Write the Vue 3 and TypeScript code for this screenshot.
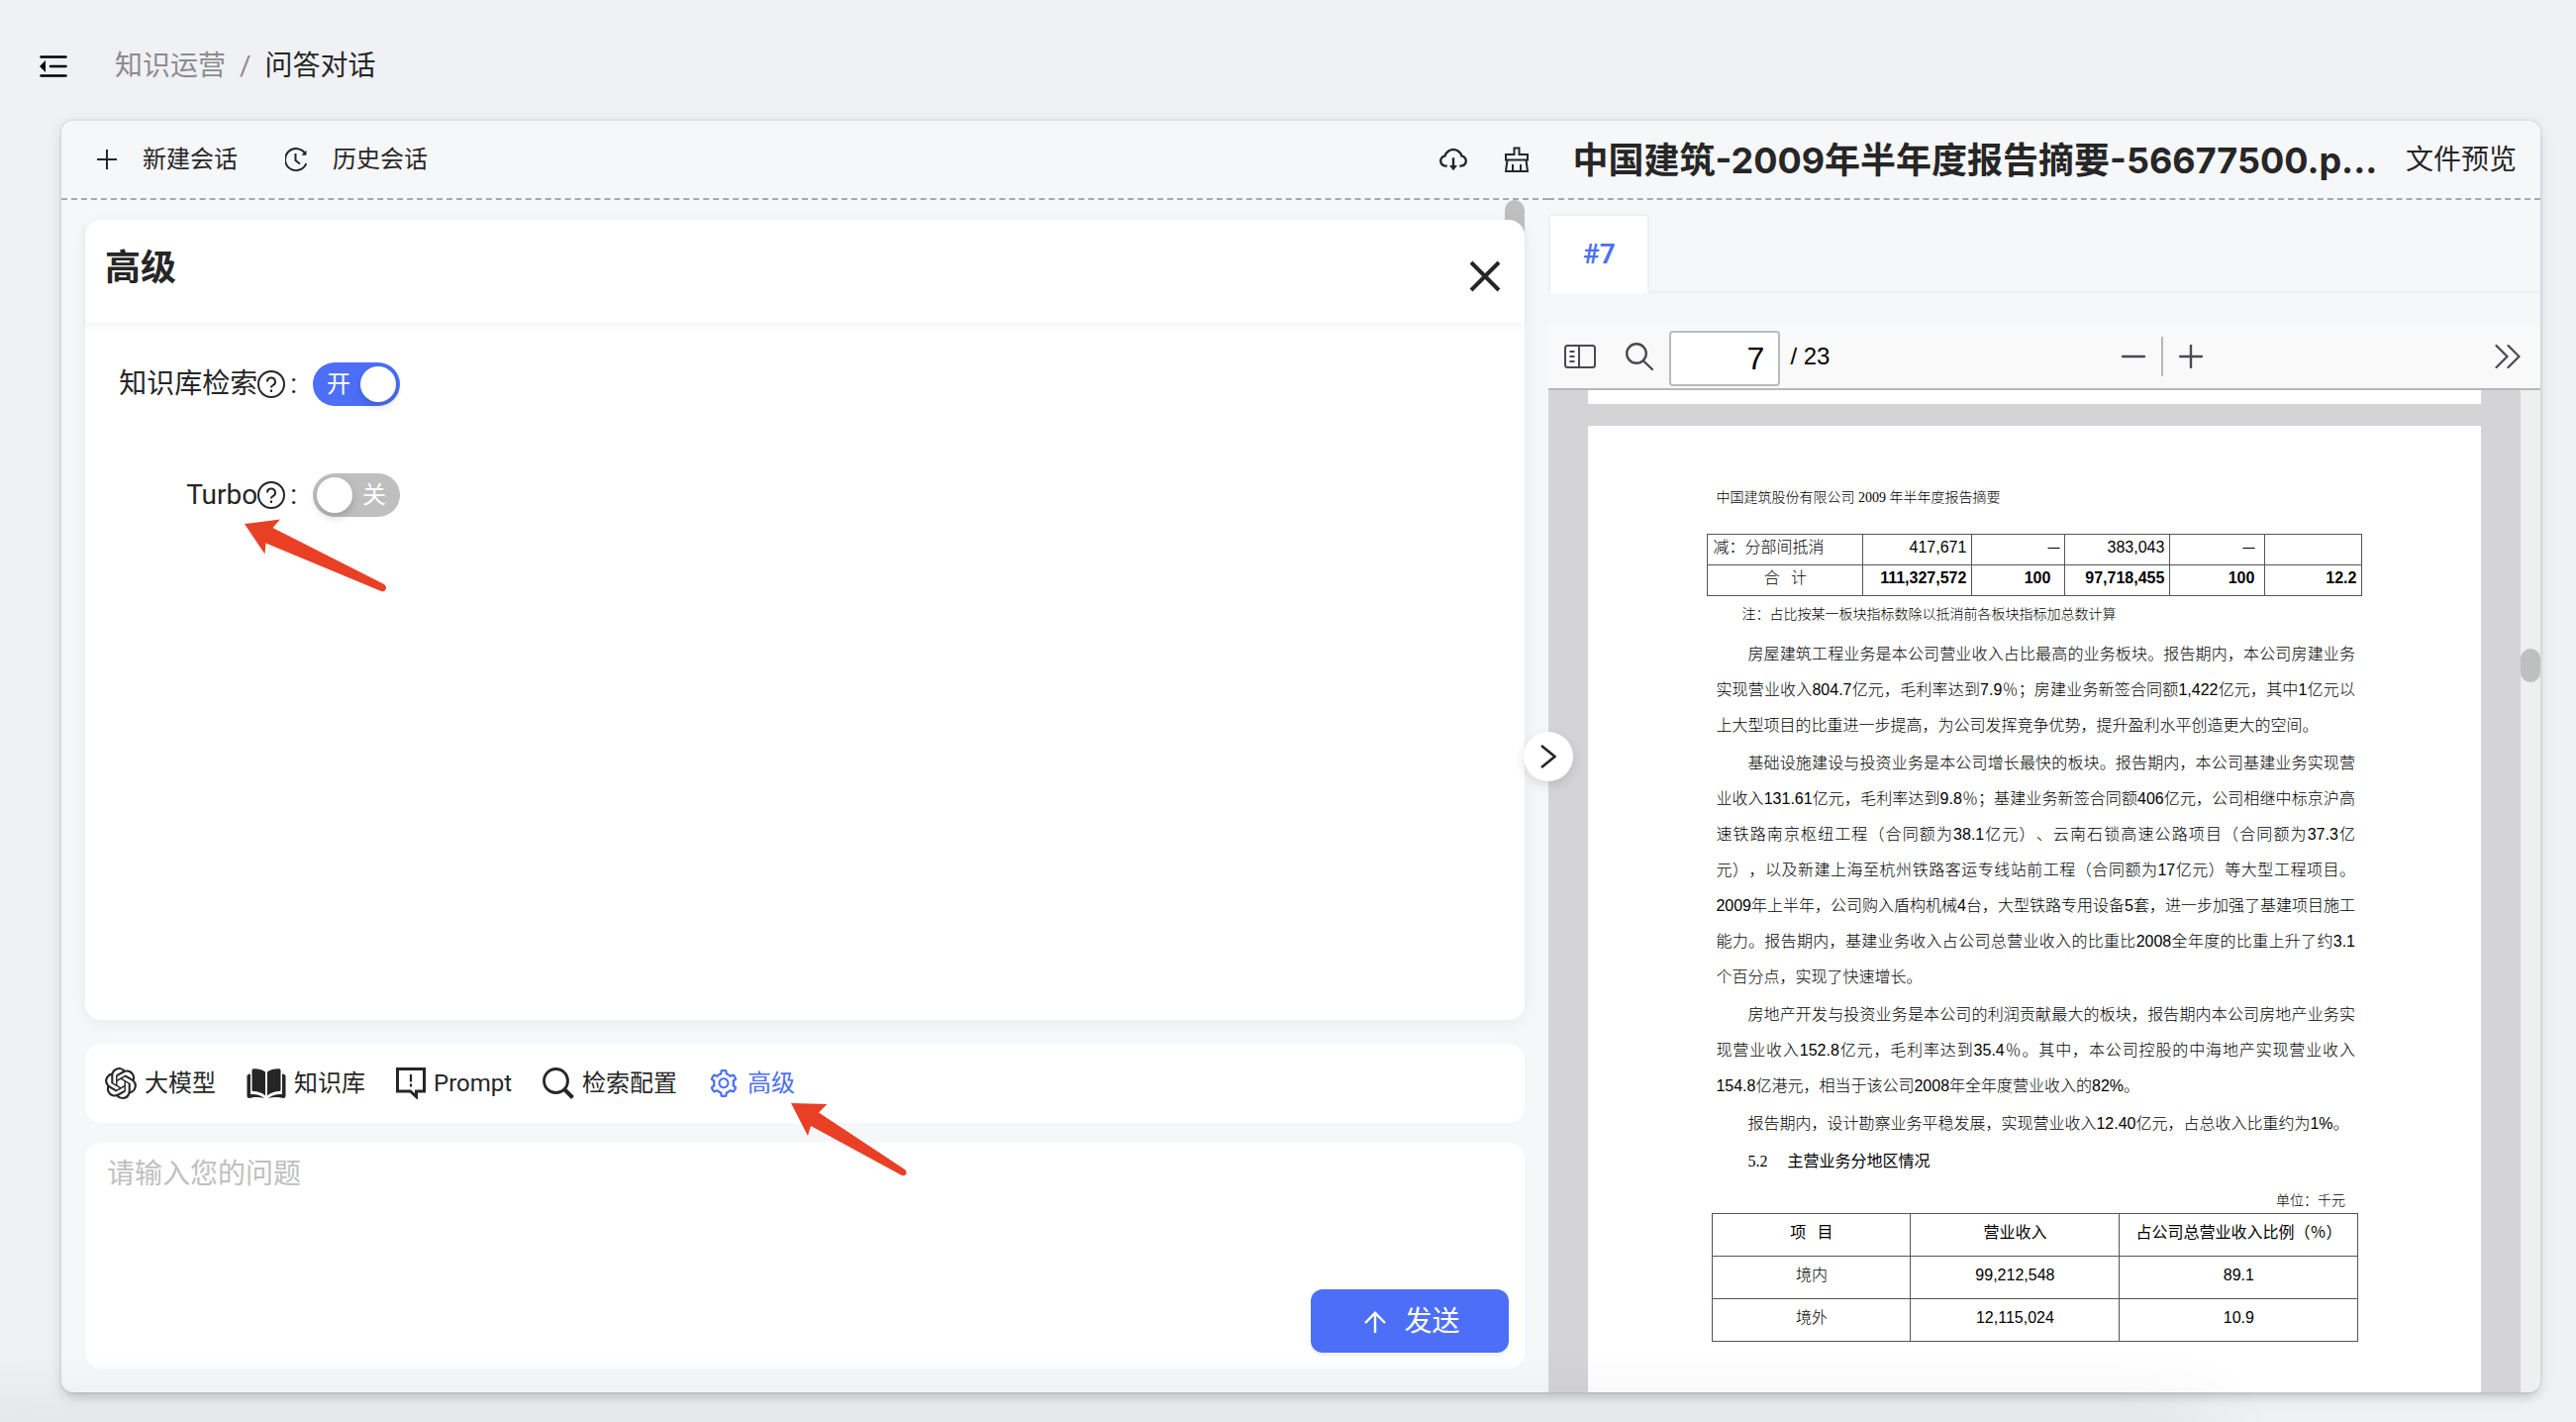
<script setup lang="ts">
import { ref } from 'vue'

interface PageLine {
  text: string
  first?: boolean
  last?: boolean
}

const searchOn = ref(true)
const turboOn = ref(false)
const question = ref('')
const pageNumber = ref('7')

const paragraphs: PageLine[][] = [
  [
    { text: '房屋建筑工程业务是本公司营业收入占比最高的业务板块。报告期内，本公司房建业务', first: true },
    { text: '实现营业收入804.7亿元，毛利率达到7.9％；房建业务新签合同额1,422亿元，其中1亿元以' },
    { text: '上大型项目的比重进一步提高，为公司发挥竞争优势，提升盈利水平创造更大的空间。', last: true },
  ],
  [
    { text: '基础设施建设与投资业务是本公司增长最快的板块。报告期内，本公司基建业务实现营', first: true },
    { text: '业收入131.61亿元，毛利率达到9.8％；基建业务新签合同额406亿元，公司相继中标京沪高' },
    { text: '速铁路南京枢纽工程（合同额为38.1亿元）、云南石锁高速公路项目（合同额为37.3亿' },
    { text: '元），以及新建上海至杭州铁路客运专线站前工程（合同额为17亿元）等大型工程项目。' },
    { text: '2009年上半年，公司购入盾构机械4台，大型铁路专用设备5套，进一步加强了基建项目施工' },
    { text: '能力。报告期内，基建业务收入占公司总营业收入的比重比2008全年度的比重上升了约3.1' },
    { text: '个百分点，实现了快速增长。', last: true },
  ],
  [
    { text: '房地产开发与投资业务是本公司的利润贡献最大的板块，报告期内本公司房地产业务实', first: true },
    { text: '现营业收入152.8亿元，毛利率达到35.4％。其中，本公司控股的中海地产实现营业收入' },
    { text: '154.8亿港元，相当于该公司2008年全年度营业收入的82%。', last: true },
  ],
  [{ text: '报告期内，设计勘察业务平稳发展，实现营业收入12.40亿元，占总收入比重约为1%。', first: true, last: true }],
]

const regions = [
  { name: '境内', income: '99,212,548', share: '89.1' },
  { name: '境外', income: '12,115,024', share: '10.9' },
]
</script>

<template>
  <div class="shell">
    <header class="topbar">
      <button class="plain" type="button" aria-label="收起菜单">
        <svg class="menu-icon" width="28" height="24" viewBox="0 0 28 24">
          <path d="M1.5 2.5h25M11 12h15.500M1.500 21.500h25" stroke="#000" stroke-width="2.600" stroke-linecap="round" />
          <path d="M0 12l6-6v12z" fill="#000" />
        </svg>
      </button>
      <nav class="crumbs" aria-label="面包屑">
        <a href="#" class="crumb-parent">知识运营</a>
        <span class="crumb-sep">/</span>
        <span>问答对话</span>
      </nav>
    </header>

    <main class="panel">
      <section class="chat">
        <div class="chat-head">
          <button class="plain head-action" type="button">
            <svg width="20" height="20" viewBox="0 0 20 20"><path d="M10 0v20M0 10h20" stroke="#262626" stroke-width="2" /></svg>
            新建会话
          </button>
          <button class="plain head-action" type="button">
            <svg width="22" height="24" viewBox="1 0 22 24" fill="none" stroke="#262626" stroke-width="2">
              <path d="M21.500 6.500A11 11 0 1 0 22.300 16" />
              <path d="M11.500 6v7l4.500 3.500" />
              <path d="M22.500 2.800v5h-5z" fill="#262626" stroke="none" />
            </svg>
            历史会话
          </button>
          <div class="head-tools">
            <button class="plain" type="button" aria-label="下载">
              <svg width="32" height="32" viewBox="0 0 1024 1024" fill="#262626">
                <path d="M624 706.300h-74.100V464c0-4.400-3.600-8-8-8h-60c-4.400 0-8 3.600-8 8v242.300H400c-6.700 0-10.400 7.700-6.300 12.900l112 141.700a8 8 0 0012.600 0l112-141.700c4.100-5.200.4-12.900-6.300-12.900z" />
                <path d="M811.400 366.700C765.600 245.900 648.900 160 512.200 160S258.800 245.800 213 366.600C127.300 389.100 64 467.200 64 560c0 110.500 89.500 200 199.900 200H304c4.400 0 8-3.600 8-8v-60c0-4.400-3.600-8-8-8h-40.100c-33.700 0-65.400-13.400-89-37.700-23.500-24.200-36-56.800-34.900-90.600.9-26.400 9.900-51.200 26.200-72.100 16.700-21.300 40.100-36.800 66.100-43.700l37.900-9.900 13.900-36.600c8.600-22.800 20.600-44.100 35.700-63.400a245.600 245.600 0 0152.400-49.900c41.100-28.900 89.500-44.200 140-44.200s98.900 15.300 140 44.200c19.900 14 37.500 30.800 52.400 49.900 15.100 19.300 27.100 40.700 35.700 63.400l13.800 36.500 37.800 10C846.100 454.500 884 503.800 884 560c0 33.100-12.900 64.300-36.300 87.700a123.070 123.070 0 01-87.600 36.300H720c-4.400 0-8 3.600-8 8v60c0 4.400 3.600 8 8 8h40.100C870.500 760 960 670.500 960 560c0-92.700-63.100-170.700-148.600-193.300z" />
              </svg>
            </button>
            <button class="plain" type="button" aria-label="清空">
              <svg width="24" height="26" viewBox="0 0 24 26" fill="none" stroke="#262626" stroke-width="2">
                <path d="M9.500 8V1.500h5V8H23v5.500H1V8zM2.500 13.500L1 25h22l-1.500-11.500M8 25v-7M16 25v-7" />
              </svg>
            </button>
          </div>
        </div>

        <div class="chat-body">
          <span class="chat-thumb" />
          <section class="card settings">
            <div class="settings-head">
              <h2>高级</h2>
              <button class="plain" type="button" aria-label="关闭">
                <svg width="32" height="32" viewBox="0 0 32 32"><path d="M2 2l28 28M30 2L2 30" stroke="#262626" stroke-width="4" /></svg>
              </button>
            </div>
            <div class="settings-body">
              <div class="field">
                <label class="field-label" for="kb-switch">
                  知识库检索
                  <svg width="28" height="28" viewBox="0 0 28 28" fill="none" stroke="#262626" stroke-width="2">
                    <circle cx="14" cy="14" r="13" /><path d="M10 11.500a4 4 0 1 1 5.600 3.600Q14 15.800 14 17.500" /><path d="M14 19.500v2.500" />
                  </svg>
                  <span class="colon">:</span>
                </label>
                <span class="switch" :class="{ on: searchOn }">
                  <input id="kb-switch" v-model="searchOn" type="checkbox" role="switch" />
                  <span class="switch-text">{{ searchOn ? '开' : '关' }}</span>
                </span>
              </div>
              <div class="field">
                <label class="field-label" for="turbo-switch">
                  Turbo
                  <svg width="28" height="28" viewBox="0 0 28 28" fill="none" stroke="#262626" stroke-width="2">
                    <circle cx="14" cy="14" r="13" /><path d="M10 11.500a4 4 0 1 1 5.600 3.600Q14 15.800 14 17.500" /><path d="M14 19.500v2.500" />
                  </svg>
                  <span class="colon">:</span>
                </label>
                <span class="switch" :class="{ on: turboOn }">
                  <input id="turbo-switch" v-model="turboOn" type="checkbox" role="switch" />
                  <span class="switch-text">{{ turboOn ? '开' : '关' }}</span>
                </span>
                <svg class="arrow arrow-turbo" width="144" height="74" viewBox="0 0 144 74">
                  <path d="M0 5L36 0.500L28.500 9L141 66Q144.500 69 142 72Q141 74 138 73L21.500 24.500L20.500 35.500Z" fill="#e94025" />
                </svg>
              </div>
            </div>
          </section>

          <div class="card modes">
            <button class="plain mode" type="button">
              <svg width="32" height="32" viewBox="0 0 24 24" fill="#262626">
                <path d="M22.2819 9.8211a5.9847 5.9847 0 0 0-.5157-4.9108 6.0462 6.0462 0 0 0-6.5098-2.9A6.0651 6.0651 0 0 0 4.9807 4.1818a5.9847 5.9847 0 0 0-3.9977 2.9 6.0462 6.0462 0 0 0 .7427 7.0966 5.98 5.98 0 0 0 .511 4.9107 6.051 6.051 0 0 0 6.5146 2.9001A5.9847 5.9847 0 0 0 13.2599 24a6.0557 6.0557 0 0 0 5.7718-4.2058 5.9894 5.9894 0 0 0 3.9977-2.9001 6.0557 6.0557 0 0 0-.7475-7.0729zm-9.022 12.6081a4.4755 4.4755 0 0 1-2.8764-1.0408l.1419-.0804 4.7783-2.7582a.7948.7948 0 0 0 .3927-.6813v-6.7369l2.02 1.1686a.071.071 0 0 1 .038.052v5.5826a4.504 4.504 0 0 1-4.4945 4.4944zm-9.6607-4.1254a4.4708 4.4708 0 0 1-.5346-3.0137l.142.0852 4.783 2.7582a.7712.7712 0 0 0 .7806 0l5.8428-3.3685v2.3324a.0804.0804 0 0 1-.0332.0615L9.74 19.9502a4.4992 4.4992 0 0 1-6.1408-1.6464zM2.3408 7.8956a4.485 4.485 0 0 1 2.3655-1.9728V11.6a.7664.7664 0 0 0 .3879.6765l5.8144 3.3543-2.0201 1.1685a.0757.0757 0 0 1-.071 0l-4.8303-2.7865A4.504 4.504 0 0 1 2.3408 7.872zm16.5963 3.8558L13.1038 8.364 15.1192 7.2a.0757.0757 0 0 1 .071 0l4.8303 2.7913a4.4944 4.4944 0 0 1-.6765 8.1042v-5.6772a.79.79 0 0 0-.407-.667zm2.0107-3.0231l-.142-.0852-4.7735-2.7818a.7759.7759 0 0 0-.7854 0L9.409 9.2297V6.8974a.0662.0662 0 0 1 .0284-.0615l4.8303-2.7866a4.4992 4.4992 0 0 1 6.6802 4.66zM8.3065 12.863l-2.02-1.1638a.0804.0804 0 0 1-.038-.0567V6.0742a4.4992 4.4992 0 0 1 7.3757-3.4537l-.142.0805L8.704 5.459a.7948.7948 0 0 0-.3927.6813zm1.0976-2.3654l2.602-1.4998 2.6069 1.4998v2.9994l-2.5974 1.4997-2.6067-1.4997Z" />
              </svg>
              大模型
            </button>
            <button class="plain mode" type="button">
              <svg width="40" height="32" viewBox="0 0 40 32" fill="#262626">
                <path d="M19 4.500C16 2 11 1 7 1.200Q5.500 1.300 5.500 3V22.500Q5.500 24 7 24C11 24.200 16 25.500 19 28.500z" />
                <path d="M21 4.500C24 2 29 1 33 1.200Q34.500 1.300 34.500 3V22.500Q34.500 24 33 24C29 24.200 24 25.500 21 28.500z" />
                <path d="M4 6.500Q.5 6.500.5 9V29Q.5 31 3 31C9 29.500 13 30 18 31C14 27.500 9 26.500 4 27z" />
                <path d="M36 6.500Q39.500 6.500 39.500 9V29Q39.500 31 37 31C31 29.500 27 30 22 31C26 27.500 31 26.500 36 27z" />
              </svg>
              知识库
            </button>
            <button class="plain mode" type="button">
              <svg width="30" height="32" viewBox="0 0 30 32" fill="none" stroke="#262626" stroke-width="3">
                <path d="M1.500 1.500h27v22.500H20.500V29.500L14.500 24H1.500z" /><path d="M15 7v7.500M15 16.500v3" stroke-width="2.200" />
              </svg>
              Prompt
            </button>
            <button class="plain mode" type="button">
              <svg width="32" height="32" viewBox="0 0 32 32" fill="none" stroke="#262626">
                <circle cx="13.500" cy="13.500" r="12" stroke-width="2.800" /><path d="M21.500 21.500L30.500 30.500" stroke-width="4" />
              </svg>
              检索配置
            </button>
            <button class="plain mode active" type="button">
              <svg width="32" height="32" viewBox="0 0 1024 1024" fill="currentColor">
                <path d="M924.800 625.700l-65.500-56c3.100-19 4.700-38.400 4.700-57.800s-1.600-38.800-4.700-57.800l65.500-56a32.030 32.030 0 009.300-35.200l-.9-2.600a443.740 443.740 0 00-79.700-137.900l-1.800-2.100a32.120 32.120 0 00-35.100-9.500l-81.300 28.900c-30-24.600-63.500-44-99.700-57.600l-15.700-85a32.050 32.050 0 00-25.800-25.700l-2.700-.5c-52.100-9.400-106.900-9.400-159 0l-2.700.5a32.050 32.050 0 00-25.800 25.700l-15.800 85.400a351.860 351.860 0 00-99 57.400l-81.900-29.100a32 32 0 00-35.100 9.500l-1.800 2.100a446.020 446.020 0 00-79.700 137.900l-.9 2.600c-4.500 12.500-.8 26.500 9.300 35.200l66.300 56.600c-3.100 18.800-4.600 38-4.600 57.100 0 19.200 1.500 38.400 4.600 57.100L99 625.500a32.030 32.030 0 00-9.300 35.200l.9 2.600c18.100 50.400 44.900 96.900 79.700 137.900l1.800 2.100a32.120 32.120 0 0035.100 9.500l81.900-29.100c29.800 24.500 63.100 43.900 99 57.400l15.800 85.400a32.050 32.050 0 0025.800 25.700l2.700.5a449.400 449.400 0 00159 0l2.700-.5a32.050 32.050 0 0025.800-25.700l15.700-85a350 350 0 0099.700-57.600l81.300 28.900a32 32 0 0035.100-9.500l1.800-2.100c34.800-41.100 61.600-87.500 79.700-137.900l.9-2.600c4.500-12.300.8-26.300-9.300-35zM788.300 465.900c2.500 15.100 3.800 30.600 3.800 46.100s-1.300 31-3.800 46.100l-6.600 40.100 74.700 63.900a370.030 370.030 0 01-42.600 73.600L721 702.800l-31.400 25.800c-23.900 19.600-50.500 35-79.300 45.800l-38.100 14.300-17.900 97a377.500 377.500 0 01-85 0l-17.900-97.200-37.800-14.500c-28.500-10.800-55-26.200-78.700-45.700l-31.400-25.900-93.400 33.200c-17-22.900-31.200-47.600-42.600-73.600l75.500-64.500-6.500-40c-2.400-14.900-3.700-30.300-3.700-45.500 0-15.300 1.200-30.600 3.700-45.500l6.500-40-75.500-64.500c11.300-26.100 25.600-50.700 42.600-73.600l93.400 33.200 31.400-25.900c23.700-19.500 50.200-34.900 78.700-45.700l37.900-14.300 17.900-97.200c28.100-3.200 56.800-3.200 85 0l17.900 97 38.100 14.300c28.700 10.800 55.400 26.200 79.300 45.800l31.400 25.800 92.800-32.900c17 22.900 31.200 47.600 42.600 73.600L781.800 426l6.500 39.900zM512 326c-97.200 0-176 78.800-176 176s78.800 176 176 176 176-78.800 176-176-78.800-176-176-176zm79.200 255.200A111.600 111.600 0 01512 614c-29.900 0-58-11.700-79.200-32.800A111.600 111.600 0 01400 502c0-29.900 11.700-58 32.800-79.200C454 401.600 482.100 390 512 390c29.900 0 58 11.600 79.200 32.800A111.600 111.600 0 01624 502c0 29.900-11.700 58-32.800 79.200z" />
              </svg>
              高级
              <svg class="arrow arrow-mode" width="118" height="74" viewBox="0 0 118 74">
                <path d="M0 0L36.500 1L28 9.500L115 67Q118 70 115.500 72.500Q113.500 74 111 72.500L20 23L17 33Z" fill="#e94025" />
              </svg>
            </button>
          </div>

          <div class="card composer">
            <textarea v-model="question" placeholder="请输入您的问题" aria-label="问题" />
            <button class="send" type="button">
              <svg width="22" height="22" viewBox="0 0 22 22" fill="none" stroke="#fff" stroke-width="2.400"><path d="M11 22V2M1 12L11 1.800L21 12" /></svg>
              发送
            </button>
          </div>
        </div>
      </section>

      <section class="preview">
        <div class="preview-head">
          <h1>中国建筑-2009年半年度报告摘要-56677500.p...</h1>
          <a href="#">文件预览</a>
        </div>
        <div class="tabs"><button class="tab" type="button">#7</button></div>

        <div class="pdf-bar">
          <button class="plain side-btn" type="button" aria-label="侧栏">
            <svg width="32" height="24" viewBox="0 0 32 24" fill="none" stroke="#4a4a4e" stroke-width="2">
              <rect x="1" y="1" width="30" height="22" rx="2.500" /><path d="M15 1v22M5.500 7h5M5.500 12h5M5.500 17h5" />
            </svg>
          </button>
          <button class="plain find-btn" type="button" aria-label="查找">
            <svg width="28" height="28" viewBox="0 0 28 28" fill="none" stroke="#4a4a4e" stroke-width="2.400" stroke-linecap="round">
              <circle cx="11" cy="11" r="9.800" /><path d="M18 18.500L27 27" />
            </svg>
          </button>
          <input v-model="pageNumber" class="page-input" aria-label="页码" />
          <span class="page-total">/ 23</span>
          <div class="zoom">
            <button class="plain" type="button" aria-label="缩小">
              <svg width="24" height="24" viewBox="0 0 24 24"><path d="M1 12h22" stroke="#4a4a4e" stroke-width="2.400" stroke-linecap="round" /></svg>
            </button>
            <span class="zoom-sep" />
            <button class="plain" type="button" aria-label="放大">
              <svg width="24" height="24" viewBox="0 0 24 24"><path d="M1 12h22M12 1v22" stroke="#4a4a4e" stroke-width="2.400" stroke-linecap="round" /></svg>
            </button>
          </div>
          <button class="plain" type="button" aria-label="更多">
            <svg width="26" height="24" viewBox="0 0 26 24" fill="none" stroke="#4a4a4e" stroke-width="2.200" stroke-linecap="round"><path d="M1.500 1L12.500 12L1.500 23M13.500 1L24.500 12L13.500 23" /></svg>
          </button>
        </div>

        <div class="viewer">
          <div class="sheets">
            <div class="sheet-prev" />
            <article class="sheet">
              <p class="doc-title">中国建筑股份有限公司 2009 年半年度报告摘要</p>
              <table class="grid sums">
                <colgroup><col class="s1" /><col class="s2" /><col class="s3" /><col class="s4" /><col class="s5" /><col /></colgroup>
                <tbody>
                  <tr>
                    <td class="name">减：分部间抵消</td><td>417,671</td><td class="dash">—</td><td>383,043</td><td class="dash near">—</td><td></td>
                  </tr>
                  <tr class="total">
                    <td class="sum">合&ensp;&thinsp;计</td><td>111,327,572</td><td class="far">100</td><td>97,718,455</td><td class="near">100</td><td>12.2</td>
                  </tr>
                </tbody>
              </table>
              <p class="doc-note">注：占比按某一板块指标数除以抵消前各板块指标加总数计算</p>
              <div v-for="(lines, i) in paragraphs" :key="i" class="para">
                <div v-for="line in lines" :key="line.text" class="line" :class="{ first: line.first, last: line.last }">{{ line.text }}</div>
              </div>
              <h3><span class="num">5.2</span>主营业务分地区情况</h3>
              <p class="unit">单位：千元</p>
              <table class="grid areas">
                <colgroup><col class="a1" /><col class="a2" /><col /></colgroup>
                <thead>
                  <tr><th>项&ensp;&thinsp;目</th><th>营业收入</th><th>占公司总营业收入比例（％）</th></tr>
                </thead>
                <tbody>
                  <tr v-for="r in regions" :key="r.name"><td>{{ r.name }}</td><td>{{ r.income }}</td><td>{{ r.share }}</td></tr>
                </tbody>
              </table>
            </article>
          </div>
          <div class="track"><span class="track-thumb" /></div>
        </div>
      </section>

      <button class="collapse" type="button" aria-label="收起预览">
        <svg width="16" height="24" viewBox="0 0 16 24" fill="none" stroke="#262626" stroke-width="2.600"><path d="M1 1L14.500 12L1 23" /></svg>
      </button>
    </main>
    <div class="bottom-shade" />
  </div>
</template>

<style>
html,
body {
  margin: 0;
  background: #f0f1f5;
}
</style>

<style scoped>
.shell {
  position: relative;
  display: flex;
  flex-direction: column;
  box-sizing: border-box;
  height: 100vh;
  padding: 0 36px 30px 62px;
  overflow: hidden;
  background: #f0f1f5;
  color: #262626;
  font-family: Roboto, 'Noto Sans CJK SC', sans-serif;
  font-size: 28px;
  line-height: 40px;
}
.shell * {
  box-sizing: border-box;
}
h1,
h2,
h3,
p {
  margin: 0;
}
a {
  color: inherit;
  text-decoration: none;
}
svg {
  display: block;
  flex: none;
}
button,
input,
textarea {
  font: inherit;
  color: inherit;
}
.plain {
  display: flex;
  align-items: center;
  padding: 0;
  border: 0;
  background: none;
  white-space: nowrap;
}
.topbar {
  display: flex;
  align-items: center;
  flex: none;
  gap: 48px;
  height: 122px;
  margin-left: -22px;
  padding-top: 12px;
}
.crumbs {
  display: flex;
  gap: 14px;
}
.crumb-parent,
.crumb-sep {
  color: #8c8c8c;
}
.panel {
  position: relative;
  display: grid;
  flex: 1;
  grid-template-columns: 3fr 2fr;
  min-height: 0;
  border-radius: 12px;
  background: #f6f7f9;
  box-shadow: 0 0 0 2px rgba(0, 0, 0, 0.04), 0 8px 10px -4px rgba(0, 0, 0, 0.12), 0 4px 16px rgba(0, 0, 0, 0.1);
}
.chat,
.preview {
  display: flex;
  flex-direction: column;
  min-width: 0;
  min-height: 0;
}
.chat-head,
.preview-head {
  display: flex;
  align-items: center;
  flex: none;
  height: 80px;
  border-bottom: 2px dashed #a8a8ab;
}
.chat-head {
  gap: 48px;
  padding: 0 20px 0 36px;
  font-size: 24px;
}
.head-action {
  gap: 26px;
}
.head-tools {
  display: flex;
  gap: 36px;
  margin-left: auto;
}
.chat-body {
  position: relative;
  display: flex;
  flex: 1;
  flex-direction: column;
  min-height: 0;
  padding: 20px 24px 24px;
}
.chat-thumb {
  position: absolute;
  top: 0;
  right: 24px;
  width: 20px;
  height: 60px;
  border-radius: 10px;
  background: #bfbfbf;
}
.card {
  border-radius: 16px;
  background: #fff;
}
.settings {
  position: relative;
  flex: 1;
  min-height: 0;
  margin-bottom: 24px;
  box-shadow: 0 2px 16px rgba(0, 0, 0, 0.06);
}
.settings-head {
  display: flex;
  align-items: center;
  justify-content: space-between;
  height: 104px;
  padding: 10px 24px 0 20px;
  box-shadow: 0 4px 6px rgba(0, 0, 0, 0.04);
}
h2 {
  margin-bottom: 16px;
  font-size: 36px;
  font-weight: 700;
  line-height: 48px;
}
.settings-body {
  display: flex;
  flex-direction: column;
  gap: 68px;
  padding: 40px 34px;
}
.field {
  position: relative;
  display: flex;
  align-items: center;
  gap: 16px;
}
.field-label {
  display: flex;
  align-items: center;
  justify-content: flex-end;
  width: 180px;
  white-space: nowrap;
}
.colon {
  padding-left: 5px;
}
.switch {
  position: relative;
  display: grid;
  align-items: center;
  width: 88px;
  height: 44px;
  border-radius: 22px;
  background: #bfbfbf;
  color: #fff;
  font-size: 24px;
}
.switch.on {
  background: #4d6ff7;
}
.switch input,
.switch-text {
  grid-area: 1 / 1;
}
.switch input {
  appearance: none;
  width: 36px;
  height: 36px;
  margin: 0 4px;
  border-radius: 50%;
  background: #fff;
  box-shadow: 0 4px 8px rgba(0, 35, 11, 0.2);
}
.switch.on input {
  justify-self: end;
}
.switch-text {
  justify-self: end;
  padding: 0 14px;
}
.switch.on .switch-text {
  justify-self: start;
}
.arrow {
  position: absolute;
}
.arrow-turbo {
  top: 46px;
  left: 127px;
}
.modes {
  display: flex;
  align-items: center;
  flex: none;
  gap: 31px;
  height: 80px;
  margin-bottom: 20px;
  padding: 0 20px;
  font-size: 24px;
}
.mode {
  position: relative;
  gap: 8px;
}
.mode.active {
  color: #4d6ff7;
}
.arrow-mode {
  top: 40px;
  left: 84px;
}
.composer {
  display: flex;
  flex: none;
  flex-direction: column;
  height: 228px;
  padding: 12px 16px 16px;
}
textarea {
  flex: 1;
  padding: 0 6px;
  border: 0;
  outline: 0;
  background: none;
  resize: none;
}
textarea::placeholder {
  color: #bfbfbf;
}
.send {
  display: flex;
  align-items: center;
  align-self: flex-end;
  justify-content: center;
  gap: 18px;
  width: 200px;
  height: 64px;
  padding: 2px 0 0 4px;
  border: 0;
  border-radius: 12px;
  background: #4d6ff7;
  box-shadow: 0 4px 0 rgba(0, 0, 0, 0.04);
  color: #fff;
}
.preview-head {
  justify-content: space-between;
  padding: 2px 24px 0;
  white-space: nowrap;
}
h1 {
  font-family: Inter, 'Noto Sans CJK SC', sans-serif;
  font-size: 36px;
  font-weight: 700;
  line-height: 52px;
}
.tabs {
  display: flex;
  flex: none;
  height: 94px;
  padding-top: 14px;
  border-bottom: 2px solid #efeff1;
}
.tab {
  width: 102px;
  height: 80px;
  padding: 2px 0 0;
  border: 2px solid #efeff1;
  border-bottom-color: #fff;
  border-radius: 4px 4px 0 0;
  background: #fff;
  color: #4d6ff7;
  font-weight: 600;
}
.pdf-bar {
  display: flex;
  align-items: center;
  flex: none;
  height: 66px;
  margin-top: 32px;
  padding: 0 20px 0 16px;
  border-bottom: 2px solid #b8b8b8;
  background: #f9f9fa;
  color: #000;
  font-family: 'Liberation Sans', Arial, sans-serif;
  font-size: 24px;
}
.side-btn {
  margin-right: 30px;
}
.find-btn {
  margin-right: 16px;
}
.page-input {
  width: 112px;
  height: 56px;
  margin-top: 4px;
  padding: 0 14px;
  border: 2px solid #bbbbbc;
  border-radius: 4px;
  outline: 0;
  background: #fff;
  font-size: 32px;
  text-align: right;
}
.page-total {
  margin-left: 10px;
}
.zoom {
  display: flex;
  align-items: center;
  gap: 16px;
  margin: 0 auto;
}
.zoom-sep {
  width: 2px;
  height: 40px;
  background: #b8b8b8;
}
.viewer {
  display: flex;
  flex: 1;
  min-height: 0;
  overflow: hidden;
  border-bottom-right-radius: 12px;
  background: #d4d4d7;
}
.sheets {
  flex: 1;
  min-width: 0;
  padding: 0 40px;
}
.sheet-prev {
  height: 14px;
  margin-bottom: 22px;
  background: #fff;
}
.sheet {
  height: 1276px;
  padding: 62px 127px 0 129px;
  background: #fff;
  color: #000;
  font-family: 'Liberation Sans', 'Noto Sans CJK SC', sans-serif;
  font-size: 16px;
  font-weight: 300;
  line-height: 24px;
  text-spacing-trim: space-all;
}
.doc-title {
  margin-bottom: 25px;
  font-family: 'Liberation Serif', 'Noto Sans CJK SC', serif;
  font-size: 14px;
  line-height: 22px;
}
.grid {
  border-collapse: collapse;
  table-layout: fixed;
}
.grid th,
.grid td {
  border: 1px solid #555;
  font-weight: inherit;
}
.sums {
  width: 662px;
  margin-left: -9px;
}
.s1 {
  width: 157px;
}
.s2 {
  width: 110px;
}
.s3 {
  width: 94px;
}
.s4 {
  width: 106px;
}
.s5 {
  width: 96px;
}
.sums td {
  height: 31px;
  padding: 0 5px 4px;
  text-align: right;
}
.sums .total td {
  font-weight: 700;
}
.sums .name {
  text-align: left;
}
.sums .total .sum {
  font-weight: 300;
  text-align: center;
}
.sums .dash {
  font-size: 12px;
}
.sums .far {
  padding-right: 14px;
}
.sums .near {
  padding-right: 10px;
}
.doc-note {
  margin-bottom: 11px;
  padding: 6px 0 0 26px;
  font-size: 14px;
}
.para {
  margin-bottom: 2px;
}
.line {
  line-height: 36px;
  text-align: justify;
  text-align-last: justify;
  white-space: nowrap;
}
.line.first {
  padding-left: 32px;
}
.line.last {
  text-align-last: left;
}
h3 {
  padding: 6px 0 0 32px;
  font-size: 16px;
  font-weight: 400;
  line-height: 24px;
}
.num {
  margin-right: 20px;
  font-family: 'Liberation Serif', serif;
}
.unit {
  margin: 16px 10px 0 0;
  font-size: 14px;
  line-height: 22px;
  text-align: right;
}
.areas {
  width: 653px;
  margin: 2px 0 0 -4px;
}
.a1 {
  width: 200px;
}
.a2 {
  width: 211px;
}
.areas th,
.areas td {
  height: 43px;
  padding: 0 0 4px;
  text-align: center;
}
.areas th {
  font-weight: 400;
}
.track {
  position: relative;
  flex: none;
  width: 20px;
  background: #efefef;
}
.track-thumb {
  position: absolute;
  top: 261px;
  left: 0;
  width: 20px;
  height: 34px;
  border-radius: 10px;
  background: #bfbfbf;
}
.collapse {
  position: absolute;
  top: 50%;
  left: 60%;
  display: grid;
  place-items: center;
  width: 50px;
  height: 50px;
  margin: -25px 0 0 -25px;
  padding: 0;
  border: 0;
  border-radius: 50%;
  background: #fff;
  box-shadow: 0 4px 12px rgba(0, 0, 0, 0.12);
}
.bottom-shade {
  position: absolute;
  right: 370px;
  bottom: -40px;
  left: -60px;
  height: 40px;
  box-shadow: 0 0 80px rgba(0, 0, 0, 0.12);
  pointer-events: none;
}
</style>
